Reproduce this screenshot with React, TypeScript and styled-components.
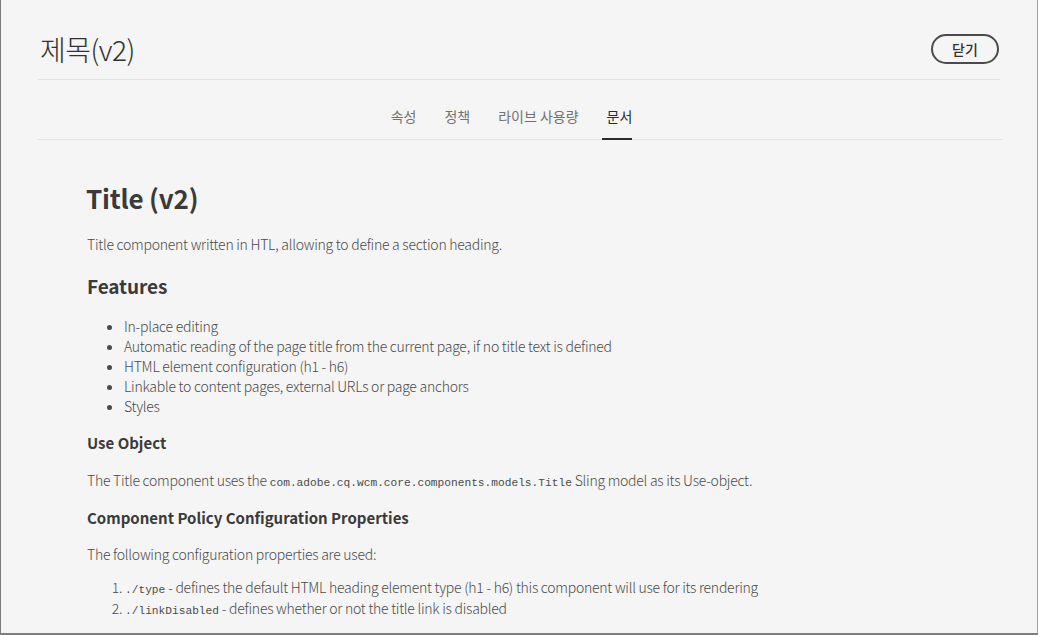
import React from 'react';
import styled, { createGlobalStyle } from 'styled-components';

const GlobalStyle = createGlobalStyle`
  html, body {
    margin: 0;
    padding: 0;
    background: #ffffff;
  }
  body {
    font-family: "Noto Sans CJK KR", "Noto Sans", sans-serif;
  }
`;

const Frame = styled.div`
  box-sizing: border-box;
  width: 1038px;
  height: 635px;
  background: #f5f5f5;
  border-left: 1px solid #7d7d7d;
  border-right: 1px solid #a0a0a0;
  border-bottom: 2px solid #7d7d7d;
  overflow: hidden;
  color: #4b4b4b;
`;

const Header = styled.header`
  box-sizing: border-box;
  margin: 0 37px;
  height: 80px;
  padding: 18px 1px 0 0;
  border-bottom: 1px solid #e3e3e3;
  display: flex;
  align-items: center;
  justify-content: space-between;
`;

const PageTitle = styled.h1`
  margin: 0 0 0 2px;
  font-size: 28px;
  font-weight: 300;
  letter-spacing: -0.5px;
  color: #323232;
  line-height: 36px;
`;

const CloseButton = styled.button`
  box-sizing: border-box;
  width: 68px;
  height: 30px;
  border: 2px solid #4b4b4b;
  border-radius: 15px;
  background: transparent;
  font-family: inherit;
  font-size: 14px;
  font-weight: 500;
  color: #323232;
  padding: 0;
  line-height: 24px;
`;

const TabBar = styled.nav`
  margin: 0 35px 0 37px;
  height: 59px;
  padding-right: 17px;
  border-bottom: 1px solid #e3e3e3;
  display: flex;
  justify-content: center;
  align-items: flex-end;
  gap: 28px;
`;

const Tab = styled.div<{ $active?: boolean }>`
  font-size: 14px;
  font-weight: 400;
  line-height: 20px;
  padding: 0 0 12px;
  margin-bottom: -1px;
  color: ${p => (p.$active ? '#2c2c2c' : '#727272')};
  border-bottom: 2px solid ${p => (p.$active ? '#2c2c2c' : 'transparent')};
  padding-left: ${p => (p.$active ? '5px' : '0')};
  margin-left: ${p => (p.$active ? '-5px' : '0')};
`;

const Content = styled.main`
  padding: 40px 0 0 86px;
  font-size: 14px;
  font-weight: 300;
  letter-spacing: -0.25px;
  line-height: 20px;
`;

const DocTitle = styled.h1`
  margin: 0 0 18px -1px;
  font-size: 26px;
  line-height: 36px;
  font-weight: 700;
  letter-spacing: -0.2px;
  color: #3a3a3a;
`;

const Para = styled.p<{ $gap?: number }>`
  margin: 0 0 ${p => p.$gap ?? 18}px;
  color: #4b4b4b;
`;

const SectionTitle = styled.h2`
  margin: 0 0 16px;
  font-size: 19px;
  line-height: 28px;
  font-weight: 700;
  letter-spacing: -0.1px;
  color: #3a3a3a;
`;

const SubTitle = styled.h3<{ $gap?: number }>`
  margin: 0 0 ${p => p.$gap ?? 16}px;
  font-size: 15px;
  line-height: 22px;
  font-weight: 700;
  letter-spacing: 0;
  color: #3a3a3a;
`;

const Bullets = styled.ul`
  margin: 0 0 16px;
  padding-left: 37px;
  li {
    line-height: 20px;
  }
`;

const Numbered = styled.ol`
  margin: 0;
  padding-left: 38px;
  li {
    line-height: 21px;
  }
`;

const Code = styled.code`
  font-family: "Liberation Mono", "DejaVu Sans Mono", monospace;
  font-size: 11.2px;
  line-height: 0;
  letter-spacing: 0;
  color: #4b4b4b;
`;

const tabs = ['속성', '정책', '라이브 사용량', '문서'];

const features = [
  'In-place editing',
  'Automatic reading of the page title from the current page, if no title text is defined',
  'HTML element configuration (h1 - h6)',
  'Linkable to content pages, external URLs or page anchors',
  'Styles',
];

export default function App() {
  return (
    <>
      <GlobalStyle />
      <Frame>
        <Header>
          <PageTitle>제목(v2)</PageTitle>
          <CloseButton>닫기</CloseButton>
        </Header>
        <TabBar>
          {tabs.map(t => (
            <Tab key={t} $active={t === '문서'}>
              {t}
            </Tab>
          ))}
        </TabBar>
        <Content>
          <DocTitle>Title (v2)</DocTitle>
          <Para>Title component written in HTL, allowing to define a section heading.</Para>
          <SectionTitle>Features</SectionTitle>
          <Bullets>
            {features.map(f => (
              <li key={f}>{f}</li>
            ))}
          </Bullets>
          <SubTitle>Use Object</SubTitle>
          <Para $gap={17}>
            The Title component uses the <Code>com.adobe.cq.wcm.core.components.models.Title</Code> Sling
            model as its Use-object.
          </Para>
          <SubTitle $gap={15}>Component Policy Configuration Properties</SubTitle>
          <Para $gap={13}>The following configuration properties are used:</Para>
          <Numbered>
            <li>
              <Code>./type</Code> - defines the default HTML heading element type (h1 - h6) this component
              will use for its rendering
            </li>
            <li>
              <Code>./linkDisabled</Code> - defines whether or not the title link is disabled
            </li>
          </Numbered>
        </Content>
      </Frame>
    </>
  );
}
